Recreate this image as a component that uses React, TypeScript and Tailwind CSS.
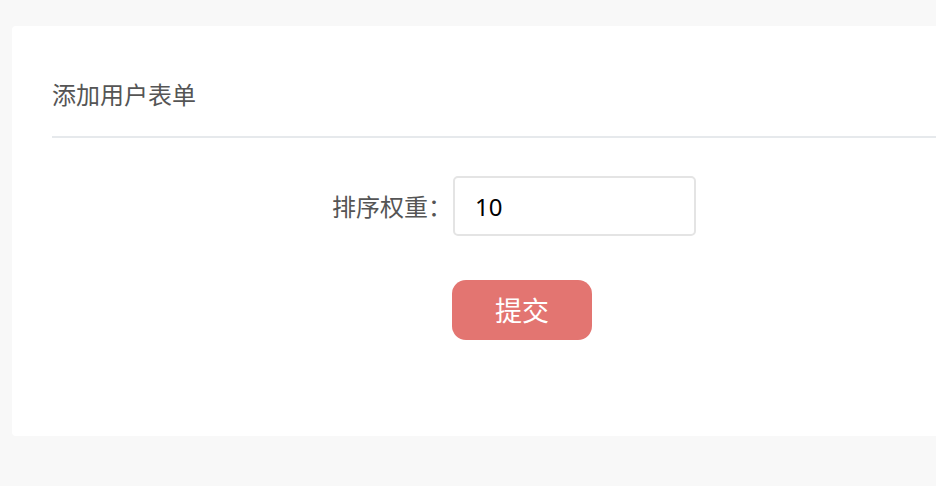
import React from "react";

export default function App() {
  return (
    <div
      className="w-[936px] h-[486px] overflow-hidden bg-[#f8f8f8] pt-[26px] pl-3"
      style={{ fontFamily: '"Noto Sans", "Noto Sans CJK SC", sans-serif' }}
    >
      <div className="w-[1000px] h-[410px] bg-white rounded-[4px] px-10">
        <div className="pt-[50px] pb-[24px] border-b-2 border-[#e6e9ec]">
          <h2
            className="text-[24px] leading-[36px] text-[#555555]"
            style={{ fontFamily: '"Noto Sans CJK SC", sans-serif' }}
          >
            添加用户表单
          </h2>
        </div>
        <div className="mt-[38px]">
          <div className="flex items-center">
            <label
              className="w-[400px] text-right text-[24px] leading-[60px] text-[#555555]"
              style={{ fontFamily: '"Noto Sans CJK SC", sans-serif' }}
            >
              排序权重：
            </label>
            <input
              className="ml-[1px] w-[243px] h-[60px] border-2 border-[#e4e4e4] rounded-[5px] pl-[20px] text-[24px] text-black outline-none"
              defaultValue="10"
            />
          </div>
          <button
            className="mt-[44px] ml-[400px] w-[140px] h-[60px] rounded-[14px] bg-[#e37571] text-white text-[27px] leading-[60px]"
            style={{ fontFamily: '"Noto Sans CJK SC", sans-serif' }}
          >
            提交
          </button>
        </div>
      </div>
    </div>
  );
}
